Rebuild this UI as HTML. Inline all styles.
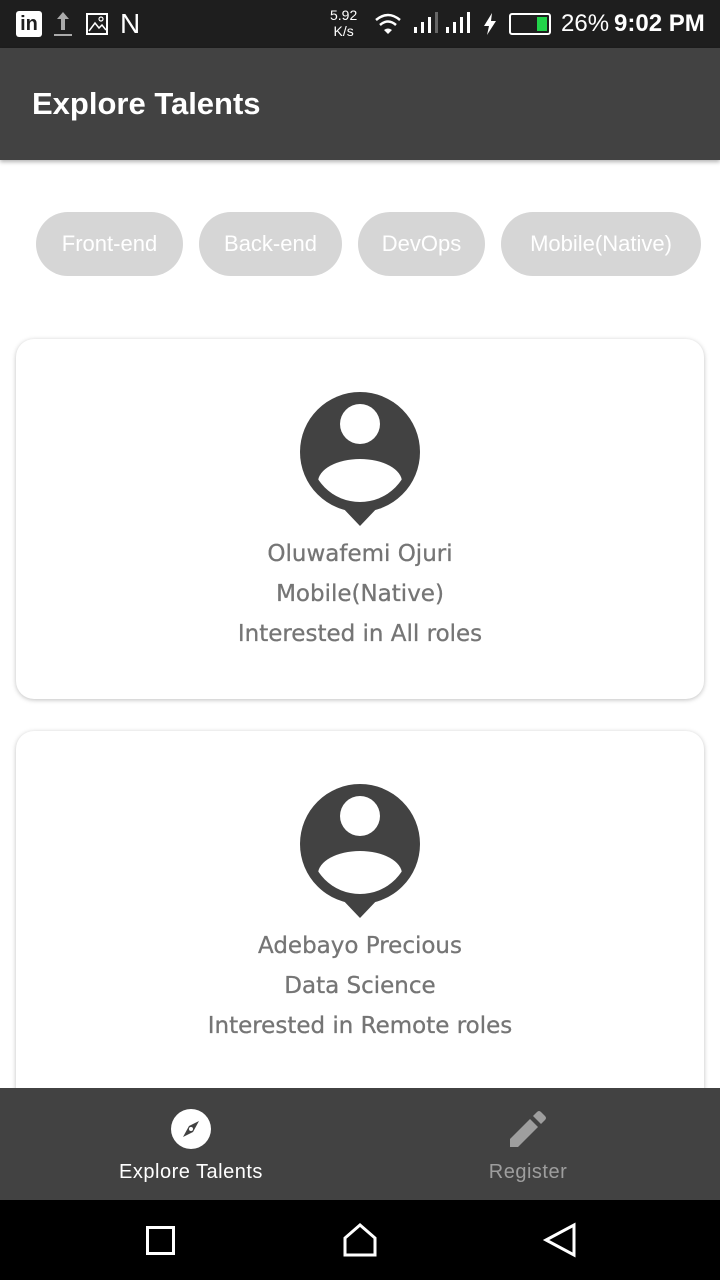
<!DOCTYPE html>
<html><head><meta charset="utf-8"><style>
*{margin:0;padding:0;box-sizing:border-box}
body{width:720px;height:1280px;background:#fff;font-family:"Liberation Sans",sans-serif;position:relative;overflow:hidden}
.sb{position:absolute;top:0;left:0;width:720px;height:48px;background:#1e1e1e;color:#fff}
.ab{position:absolute;top:48px;left:0;width:720px;height:112px;background:#424242;box-shadow:0 2px 4px rgba(0,0,0,.3)}
.ab h1{position:absolute;left:32px;top:38px;font-size:31px;font-weight:bold;color:#fff}
.chip{position:absolute;top:212px;height:64px;border-radius:32px;background:#d6d6d6;color:#fff;font-size:22px;line-height:64px;text-align:center}
.card{position:absolute;left:16px;width:688px;background:#fff;border-radius:18px;box-shadow:0 1px 5px rgba(0,0,0,.25)}
.t{position:absolute;width:720px;left:0;text-align:center;color:#757575;font-size:23px;font-family:"DejaVu Sans",sans-serif;-webkit-text-stroke:.3px #757575}
.nav{position:absolute;top:1088px;left:0;width:720px;height:112px;background:#424242}
.sys{position:absolute;top:1200px;left:0;width:720px;height:80px;background:#000}
.bar{position:absolute;background:#fff;width:3px}
</style></head><body>
<div class="sb">
<div style="position:absolute;left:16px;top:11px;width:26px;height:26px;background:#fff;border-radius:3px;color:#1e1e1e;font-weight:bold;font-size:20px;line-height:27px;text-align:center">in</div>
<svg style="position:absolute;left:52px;top:10px" width="22" height="28"><path d="M11 2 L5 9 H9 V20 H13 V9 H17Z" fill="#aaa"/><rect x="2" y="24" width="18" height="2" fill="#aaa"/></svg>
<svg style="position:absolute;left:86px;top:13px" width="22" height="22"><rect x="1" y="1" width="20" height="20" fill="none" stroke="#fff" stroke-width="2"/><path d="M3 18 L9 10 L13 15 L16 12 L20 17" fill="none" stroke="#fff" stroke-width="1.5"/><circle cx="15" cy="6" r="2" fill="none" stroke="#fff" stroke-width="1.2"/></svg>
<div style="position:absolute;left:120px;top:8px;font-size:28px">N</div>
<div style="position:absolute;left:330px;top:7px;font-size:14px;line-height:16px;text-align:center">5.92<br>K/s</div>
<svg style="position:absolute;left:374px;top:12px" width="30" height="24"><path d="M2 8 Q14 -2 26 8" fill="none" stroke="#fff" stroke-width="2.5"/><path d="M6 13 Q14 6 22 13" fill="none" stroke="#fff" stroke-width="2.5"/><path d="M10 18 Q14 15 18 18 L14 22Z" fill="#fff"/></svg>
<div class="bar" style="left:414px;top:27px;height:6px"></div><div class="bar" style="left:421px;top:22px;height:11px"></div><div class="bar" style="left:428px;top:17px;height:16px"></div><div class="bar" style="left:435px;top:12px;height:21px;background:#666"></div>
<div class="bar" style="left:446px;top:27px;height:6px"></div><div class="bar" style="left:453px;top:22px;height:11px"></div><div class="bar" style="left:460px;top:17px;height:16px"></div><div class="bar" style="left:467px;top:12px;height:21px"></div>
<svg style="position:absolute;left:483px;top:13px" width="14" height="22"><path d="M9 0 L1 13 H6 L4 22 L13 8 H8Z" fill="#fff"/></svg>
<div style="position:absolute;left:509px;top:13px;width:42px;height:22px;border:2px solid #fff;border-radius:3px"><div style="position:absolute;right:2px;top:2px;width:10px;height:14px;background:#22d34a"></div></div>
<div style="position:absolute;left:561px;top:10px;font-size:24px">26%</div>
<div style="position:absolute;left:614px;top:10px;font-size:24px;font-weight:bold">9:02 PM</div>
</div>
<div class="ab"><h1>Explore Talents</h1></div>
<div class="chip" style="left:36px;width:147px">Front-end</div>
<div class="chip" style="left:199px;width:143px">Back-end</div>
<div class="chip" style="left:358px;width:127px">DevOps</div>
<div class="chip" style="left:501px;width:200px">Mobile(Native)</div>
<div class="card" style="top:339px;height:360px"></div>
<div class="card" style="top:731px;height:380px"></div>
<svg style="position:absolute;left:0;top:0" width="720" height="1280">
<defs><clipPath id="cp"><circle cx="360" cy="452" r="50"/></clipPath></defs>
<g id="ic"><circle cx="360" cy="452" r="60" fill="#424242"/><path d="M340 505 L360 526 L380 505Z" fill="#424242"/><circle cx="360" cy="424" r="20" fill="#fff"/><ellipse cx="360" cy="482" rx="42" ry="23" fill="#fff" clip-path="url(#cp)"/></g>
<use href="#ic" y="392"/>
</svg>
<div class="t" style="top:541px">Oluwafemi Ojuri</div>
<div class="t" style="top:581px">Mobile(Native)</div>
<div class="t" style="top:621px">Interested in All roles</div>
<div class="t" style="top:933px">Adebayo Precious</div>
<div class="t" style="top:973px">Data Science</div>
<div class="t" style="top:1013px">Interested in Remote roles</div>
<div class="nav">
<svg style="position:absolute;left:171px;top:21px" width="40" height="40"><circle cx="20" cy="20" r="20" fill="#fff"/><path d="M28 12 L22 23 L12 28 L18 17Z" fill="#424242"/><circle cx="20" cy="20" r="2" fill="#fff"/></svg>
<div style="position:absolute;left:0;width:382px;top:73px;text-align:center;color:#fff;font-size:20px;letter-spacing:.5px">Explore Talents</div>
<svg style="position:absolute;left:508px;top:21px" width="40" height="40"><path d="M2 30 L2 38 L10 38 L30 18 L22 10Z M25 7 L29 3 Q31 1 33 3 L37 7 Q39 9 37 11 L33 15Z" fill="#9e9e9e"/></svg>
<div style="position:absolute;left:428px;width:200px;top:73px;text-align:center;color:#9e9e9e;font-size:20px;letter-spacing:.5px">Register</div>
</div>
<div class="sys">
<div style="position:absolute;left:146px;top:26px;width:29px;height:29px;border:3px solid #fff"></div>
<svg style="position:absolute;left:342px;top:22px" width="36" height="36"><path d="M3 33 L3 16 L18 3 L33 16 L33 33Z" fill="none" stroke="#fff" stroke-width="3"/></svg>
<svg style="position:absolute;left:542px;top:22px" width="36" height="36"><path d="M32 3 L32 33 L4 18Z" fill="none" stroke="#fff" stroke-width="3"/></svg>
</div>
</body></html>
